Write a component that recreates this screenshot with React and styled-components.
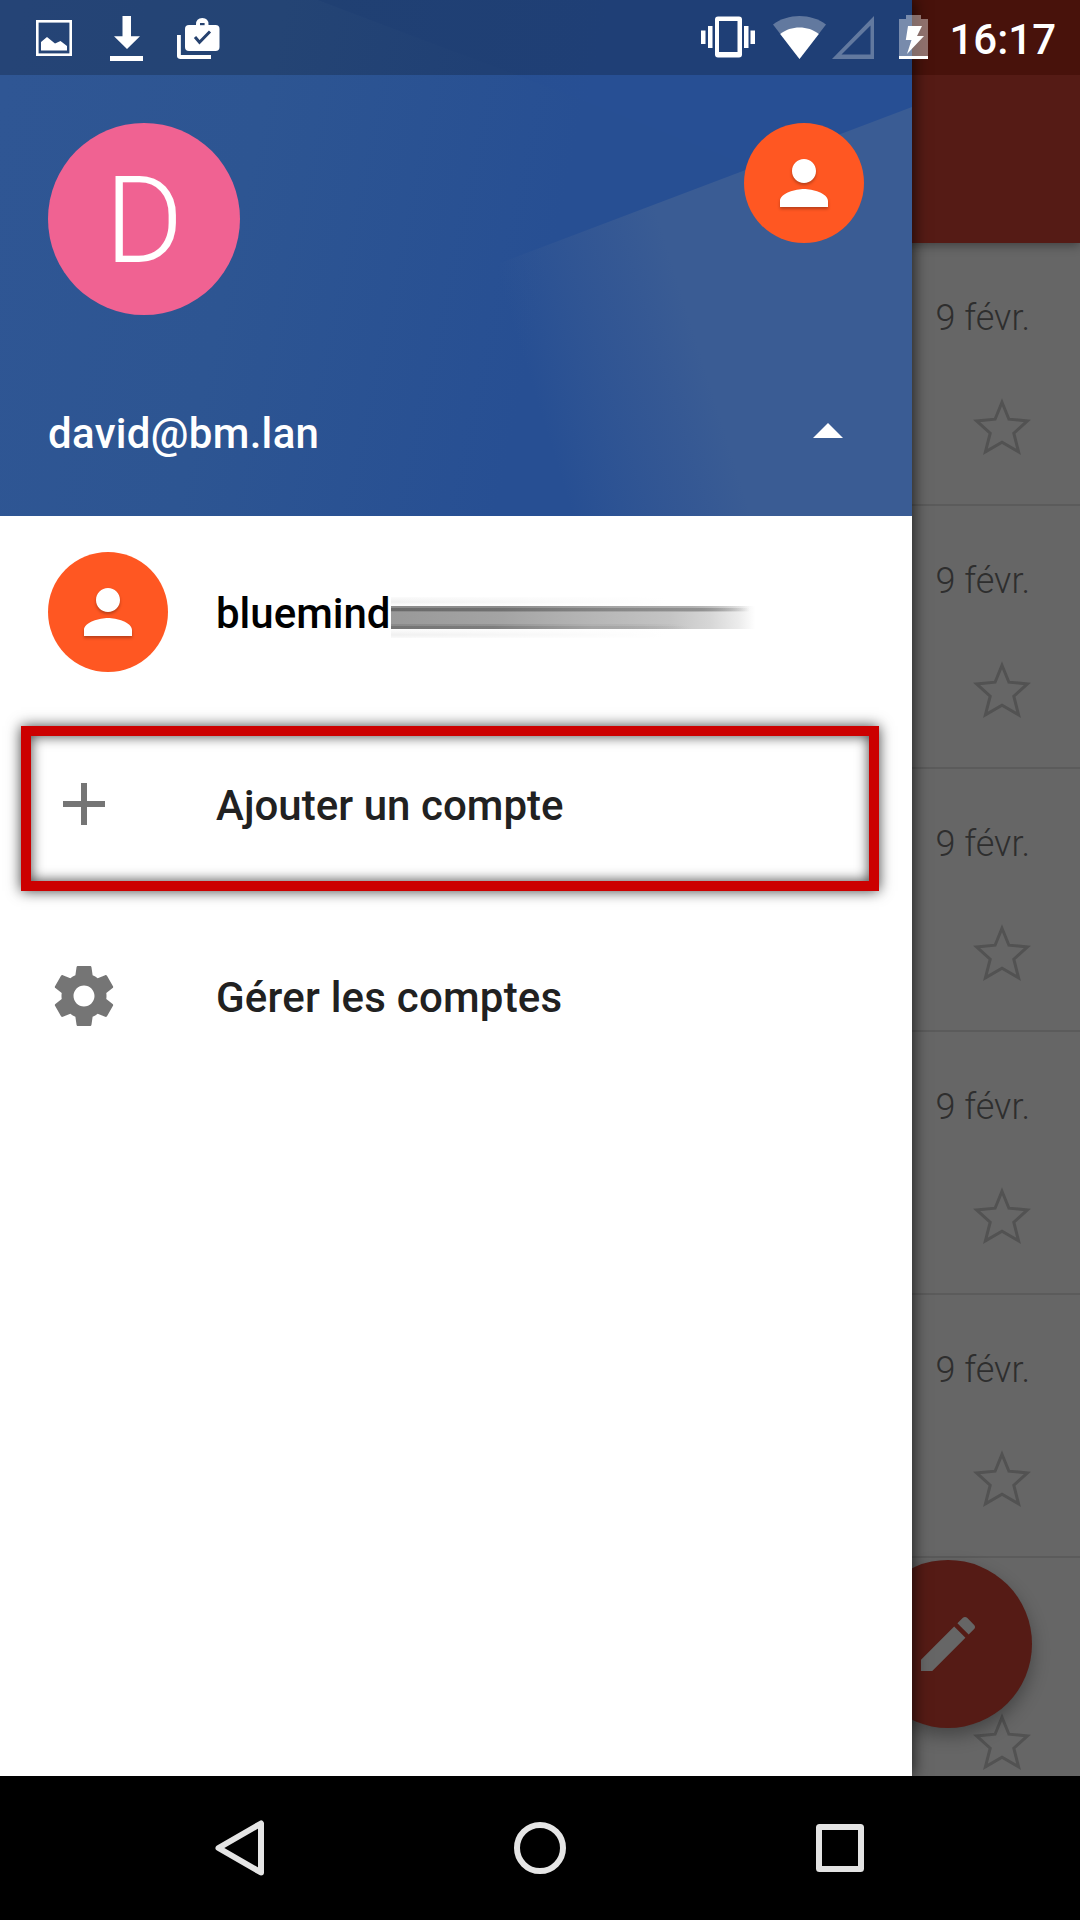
import React from 'react';
import styled, { createGlobalStyle } from 'styled-components';

const GlobalStyle = createGlobalStyle`
  html, body { margin: 0; padding: 0; background: #000; }
  * { box-sizing: border-box; }
  svg { display: block; flex: none; }
`;

const Screen = styled.div`
  width: 1080px;
  height: 1920px;
  display: flex;
  flex-direction: column;
  position: relative;
  overflow: hidden;
  font-family: Roboto, "Liberation Sans", sans-serif;
`;

const Content = styled.main`
  height: 1776px;
  position: relative;
  overflow: hidden;
  background: #666;
`;

/* Inbox, dimmed behind the drawer */
const AppBar = styled.header`
  height: 243px;
  background: linear-gradient(#5a170e 75px, #551b15 75px);
  box-shadow: 0 2px 10px rgba(0, 0, 0, 0.4);
  position: relative;
`;

const MailRow = styled.article`
  height: 263px;
  padding: 50px 48px 0 0;
  border-bottom: 2px solid #5b5b5b;
  display: flex;
  flex-direction: column;
  align-items: flex-end;
  gap: 55px;
`;

const MailDate = styled.time`
  font-size: 36px;
  line-height: 50px;
  padding-right: 2px;
  font-weight: 300;
  color: #2e2e2e;
`;

const Fab = styled.button`
  position: absolute;
  left: 864px;
  top: 1560px;
  width: 168px;
  height: 168px;
  padding: 0;
  border: 0;
  border-radius: 50%;
  background: #551b15;
  box-shadow: 0 8px 18px rgba(0, 0, 0, 0.32);
  display: flex;
  align-items: center;
  justify-content: center;
`;

/* Navigation drawer */
const Drawer = styled.aside`
  position: absolute;
  top: 0;
  left: 0;
  width: 912px;
  height: 100%;
  background: #fff;
  box-shadow: 2px 0 14px rgba(0, 0, 0, 0.65);
`;

const DrawerHeader = styled.div`
  height: 516px;
  position: relative;
  padding: 123px 48px 48px;
  display: flex;
  flex-direction: column;
  justify-content: space-between;
`;

const Artwork = styled.svg`
  position: absolute;
  inset: 0;
`;

const HeaderRow = styled.div`
  position: relative;
  display: flex;
  justify-content: space-between;
  align-items: ${(p) => p.$align};
`;

const Avatar = styled.div`
  width: ${(p) => p.$size}px;
  height: ${(p) => p.$size}px;
  border-radius: 50%;
  background: ${(p) => p.$color};
  color: #fff;
  font-size: 120px;
  font-weight: 300;
  line-height: 1;
  display: flex;
  align-items: center;
  justify-content: center;
  flex: none;
`;

const Initial = styled.span`
  padding-top: 3px;
`;

const Email = styled.span`
  font-size: 42px;
  line-height: 72px;
  font-weight: 500;
  letter-spacing: 0.32px;
  color: #fff;
  padding-top: 2px;
  margin-bottom: -2px;
`;

const AccountList = styled.nav`
  display: flex;
  flex-direction: column;
`;

const AccountRow = styled.div`
  height: 192px;
  padding: 0 48px;
  display: flex;
  align-items: center;
  position: relative;
`;

const Lead = styled.div`
  width: 168px;
  flex: none;
`;

const Label = styled.span`
  font-size: 42px;
  line-height: 60px;
  padding-top: 3px;
  font-weight: 500;
  white-space: nowrap;
  letter-spacing: ${(p) => p.$spacing || 0}px;
  color: ${(p) => p.$color || '#212121'};
`;

/* Smeared-out remainder of the account name */
const Smudge = styled.span`
  width: 366px;
  height: 41px;
  margin-top: 10px;
  background:
    linear-gradient(90deg, #6a6a6a, #707070 30%, #868686 60%, #929292 85%, rgba(160,160,160,0) 98%) 0 11px / 100% 3px,
    linear-gradient(90deg, #8c8c8c, #8c8c8c 30%, #a4a4a4 60%, #b0b0b0 82%, rgba(190,190,190,0) 98%) 0 9px / 100% 6px,
    linear-gradient(90deg, #747474, #7e7e7e 28%, #a4a4a4 55%, rgba(190,190,190,0) 82%) 0 29px / 100% 3px,
    linear-gradient(90deg, #8a8a8a, #929292 28%, #b0b0b0 55%, rgba(190,190,190,0) 80%) 0 27px / 100% 5px,
    linear-gradient(90deg, #999, #a4a4a4 30%, #b6b6b6 55%, #c4c4c4 76%, #d6d6d6 87%, #ececec 95%, #fff 99.5%) 0 9px / 100% 23px,
    linear-gradient(90deg, rgba(255,255,255,0), #fff 75%),
    linear-gradient(180deg, #fbfbfb 0, #f0f0f0 5px, #fbfbfb 8px, #fdfdfd 32px, #f0f0f0 38px, #fafafa 41px);
  background-repeat: no-repeat;
`;

const Highlight = styled.div`
  position: absolute;
  left: 21px;
  top: 18px;
  width: 858px;
  height: 165px;
  border: 10px solid #c00;
  box-shadow: 0 0 13px rgba(0, 0, 0, 0.75), inset 0 0 13px rgba(0, 0, 0, 0.75);
`;

/* System bars */
const StatusBar = styled.div`
  position: absolute;
  inset: 0 0 auto 0;
  height: 75px;
  background: rgba(0, 0, 0, 0.2);
  display: flex;
  justify-content: space-between;
  padding: 15px 24px 0 36px;
`;

const StatusGroup = styled.div`
  display: flex;
  align-items: flex-start;
`;

const StatusIcon = styled.svg`
  margin-right: ${(p) => p.$after || 0}px;
`;

const Clock = styled.span`
  font-size: 42px;
  line-height: 50px;
  font-weight: 500;
  color: #fff;
`;

const NavBar = styled.footer`
  height: 144px;
  background: #000;
  display: flex;
  justify-content: center;
`;

const NavKey = styled.div`
  width: 300px;
  display: flex;
  align-items: center;
  justify-content: center;
`;

const Star = () => (
  <svg width="60" height="60" viewBox="0 0 60 60" fill="none" stroke="#525252" strokeWidth="3" strokeMiterlimit="10">
    <path d="M30 4.200L36.900 21.200L55.400 22.900L41.800 35.200L46.600 53.800L30 44.200L13.400 53.800L18.200 35.200L4.600 22.900L23.100 21.200Z" />
  </svg>
);

const PersonIcon = () => (
  <svg width="72" height="72" viewBox="0 0 24 24" fill="#fff" style={{ filter: 'drop-shadow(0 2px 1.5px rgba(0,0,0,.28))' }}>
    <path d="M12 12c2.210 0 4-1.790 4-4s-1.790-4-4-4-4 1.790-4 4 1.790 4 4 4zm0 2c-2.670 0-8 1.340-8 4v2h16v-2c0-2.660-5.330-4-8-4z" />
  </svg>
);

const MaterialIcon = ({ d, color, size = 72 }) => (
  <svg width={size} height={size} viewBox="0 0 24 24" fill={color}>
    <path d={d} />
  </svg>
);

const ADD = 'M19 13h-6v6h-2v-6H5v-2h6V5h2v6h6v2z';
const GEAR =
  'M19.43 12.98c.04-.32.07-.64.07-.98s-.03-.66-.07-.98l2.11-1.65c.19-.15.24-.42.12-.64l-2-3.46c-.12-.22-.39-.3-.61-.22l-2.49 1c-.52-.4-1.08-.73-1.69-.98l-.38-2.65C14.46 2.18 14.25 2 14 2h-4c-.25 0-.46.18-.49.42l-.38 2.65c-.61.25-1.17.59-1.69.98l-2.49-1c-.23-.09-.49 0-.61.22l-2 3.46c-.13.22-.07.49.12.64l2.11 1.65c-.04.32-.07.65-.07.98s.03.66.07.98l-2.11 1.65c-.19.15-.24.42-.12.64l2 3.46c.12.22.39.3.61.22l2.49-1c.52.4 1.08.73 1.69.98l.38 2.65c.03.24.24.42.49.42h4c.25 0 .46-.18.49-.42l.38-2.65c.61-.25 1.17-.59 1.69-.98l2.49 1c.23.09.49 0 .61-.22l2-3.46c.12-.22.07-.49-.12-.64l-2.11-1.65zM12 15.5c-1.93 0-3.5-1.57-3.5-3.5s1.57-3.5 3.5-3.5 3.5 1.57 3.5 3.5-1.57 3.5-3.5 3.5z';
const PENCIL =
  'M3 17.25V21h3.75L17.81 9.94l-3.75-3.75L3 17.25zM20.71 7.04c.39-.39.39-1.02 0-1.41l-2.34-2.34c-.39-.39-1.02-.39-1.41 0l-1.83 1.83 3.75 3.75 1.83-1.83z';
const ARROW_UP = 'M7 14l5-5 5 5z';

const HeaderArt = () => (
  <Artwork width="912" height="516" viewBox="0 0 912 516">
    <defs>
      <linearGradient id="base" gradientUnits="userSpaceOnUse" x1="0" y1="100" x2="560" y2="220">
        <stop offset="0" stopColor="#2f5694" />
        <stop offset="0.45" stopColor="#2d5592" />
        <stop offset="1" stopColor="#274f93" />
      </linearGradient>
      <linearGradient id="facet" gradientUnits="userSpaceOnUse" x1="320" y1="0" x2="600" y2="60">
        <stop offset="0" stopColor="#28508f" />
        <stop offset="1" stopColor="#274f94" />
      </linearGradient>
      <linearGradient id="beam" gradientUnits="userSpaceOnUse" x1="517" y1="338" x2="680" y2="287">
        <stop offset="0" stopColor="#3a5c95" stopOpacity="0" />
        <stop offset="0.6" stopColor="#385a94" stopOpacity="0.7" />
        <stop offset="1" stopColor="#3a5c94" />
      </linearGradient>
    </defs>
    <path d="M0 0H912V516H0Z" fill="url(#base)" />
    <path d="M318 0H912V230L600 107Z" fill="url(#facet)" />
    <path d="M912 107V516H500V263Z" fill="url(#beam)" />
  </Artwork>
);

const MAILS = [1, 2, 3, 4, 5, 6];

export default function App() {
  return (
    <Screen>
      <GlobalStyle />
      <Content>
        <AppBar />
        {MAILS.map((id) => (
          <MailRow key={id}>
            <MailDate>9 févr.</MailDate>
            <Star />
          </MailRow>
        ))}
        <Fab aria-label="Nouveau message">
          <MaterialIcon d={PENCIL} color="#666" />
        </Fab>

        <Drawer>
          <DrawerHeader>
            <HeaderArt />
            <HeaderRow $align="flex-start">
              <Avatar $size={192} $color="#f06292"><Initial>D</Initial></Avatar>
              <Avatar $size={120} $color="#ff5722"><PersonIcon /></Avatar>
            </HeaderRow>
            <HeaderRow $align="center">
              <Email>david@bm.lan</Email>
              <MaterialIcon d={ARROW_UP} color="#fff" />
            </HeaderRow>
          </DrawerHeader>
          <AccountList>
            <AccountRow>
              <Lead><Avatar $size={120} $color="#ff5722"><PersonIcon /></Avatar></Lead>
              <Label $color="#000">bluemind</Label>
              <Smudge />
            </AccountRow>
            <AccountRow>
              <Lead><MaterialIcon d={ADD} color="#757575" /></Lead>
              <Label $spacing={0.04}>Ajouter un compte</Label>
              <Highlight />
            </AccountRow>
            <AccountRow>
              <Lead><MaterialIcon d={GEAR} color="#757575" /></Lead>
              <Label $spacing={0.22}>Gérer les comptes</Label>
            </AccountRow>
          </AccountList>
        </Drawer>

        <StatusBar>
          <StatusGroup>
            <StatusIcon $after={38} width="36" height="46" viewBox="0 0 36 46">
              <rect x="1.3" y="6.3" width="33.4" height="33.4" fill="none" stroke="#fff" strokeWidth="2.6" />
              <path d="M5 35.500V27l6-5 8 6.500 5.500-2.500 6.500 5v4.500Z" fill="#fff" />
            </StatusIcon>
            <StatusIcon $after={34} width="33" height="46" viewBox="0 0 33 46" fill="#fff">
              <path d="M12.500 1h8.500v20.300h9L17 34 4 21.300h8.500ZM0 41h33v5H0Z" />
            </StatusIcon>
            <StatusIcon width="43" height="46" viewBox="0 0 43 46">
              <path d="M1.900 20V40.500Q1.900 42 3.500 42H34" fill="none" stroke="#fff" strokeWidth="3.900" />
              <path d="M19 12V9.500Q19 3 25.300 3T31.500 9.500V12Z" fill="#fff" />
              <rect x="8" y="10" width="34.500" height="26" rx="4" fill="#fff" />
              <path d="M23 8h4.600v2.200H23Z" fill="#26426f" />
              <path d="M18 22l4.500 5.200L33 16.500" fill="none" stroke="#26426f" strokeWidth="3" />
            </StatusIcon>
          </StatusGroup>
          <StatusGroup>
            <StatusIcon $after={18} width="54" height="46" viewBox="0 0 54 46" fill="#fff">
              <path fillRule="evenodd" d="M17 1.500h21a3 3 0 0 1 3 3v35a3 3 0 0 1-3 3H17a3 3 0 0 1-3-3v-35a3 3 0 0 1 3-3ZM18 6v31h18.500V6Z" />
              <path d="M0 15.500h4.500V29H0ZM7 11h4.500v22H7ZM43 11h4.500v22H43ZM49.500 15.500H54V29h-4.500Z" />
            </StatusIcon>
            <StatusIcon $after={6} width="53" height="46" viewBox="0 0 53 46" fill="#fff">
              <path d="M0 9.500C15 -2 38 -2 53 9.500L26.500 44Z" opacity="0.3" />
              <path d="M7.200 19C18 10.400 35 10.400 45.800 19L26.500 44Z" />
            </StatusIcon>
            <StatusIcon $after={25} width="42" height="46" viewBox="0 0 42 46" fill="#fff">
              <path fillRule="evenodd" opacity="0.3" d="M42 1V44H0ZM38.500 10.500L9.500 39.500h29Z" />
            </StatusIcon>
            <StatusIcon $after={21} width="29" height="46" viewBox="0 0 29 46" fill="#fff">
              <path d="M7 0h15v4h7v37H0V4h7Z" opacity="0.4" />
              <path d="M0 41h29v3H0Z" />
              <path d="M9 11h14l-5 10h7L8 39l4.500-14H6.800Z" />
            </StatusIcon>
            <Clock>16:17</Clock>
          </StatusGroup>
        </StatusBar>
      </Content>

      <NavBar>
        <NavKey>
          <svg width="60" height="60" viewBox="0 0 60 60" fill="none" stroke="#e5e5e5" strokeWidth="6" strokeLinejoin="round">
            <path d="M51 5.500V54.500L8.500 30Z" />
          </svg>
        </NavKey>
        <NavKey>
          <svg width="60" height="60" viewBox="0 0 60 60" fill="none" stroke="#e5e5e5" strokeWidth="6">
            <circle cx="30" cy="30" r="23" />
          </svg>
        </NavKey>
        <NavKey>
          <svg width="60" height="60" viewBox="0 0 60 60" fill="none" stroke="#e3e3e3" strokeWidth="6" strokeLinejoin="round">
            <rect x="9" y="9" width="42" height="42" rx="0.500" />
          </svg>
        </NavKey>
      </NavBar>
    </Screen>
  );
}
